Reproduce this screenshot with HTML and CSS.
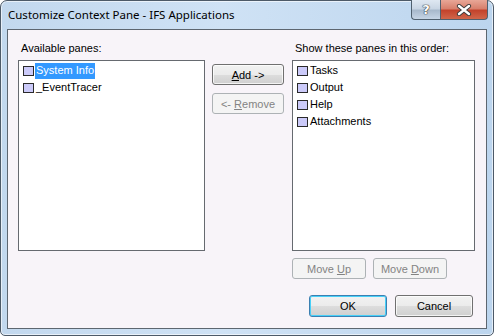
FILE: index.html
```html
<!DOCTYPE html>
<html lang="en">
<head>
    <meta charset="UTF-8">
    <title>Customize Context Pane - IFS Applications</title>
    <link rel="stylesheet" href="styles.css">
</head>
<body>

    <div class="window">
        <div class="titlebar">
            <span class="title">Customize Context Pane - IFS Applications</span>
            <div class="caption-buttons">
                <div class="cap-btn help">?</div>
                <div class="cap-btn close">
                    <svg width="16" height="12" viewBox="0 0 16 12">
                        <path d="M3 2 L13 10 M13 2 L3 10" stroke="#3a3a3a" stroke-width="4.2" stroke-linecap="round"/>
                        <path d="M3 2 L13 10 M13 2 L3 10" stroke="#ffffff" stroke-width="2.4" stroke-linecap="round"/>
                    </svg>
                </div>
            </div>
        </div>

        <div class="client">
            <div class="panes">
                <div class="col-left">
                    <div class="label">Available panes:</div>
                    <ul class="listbox left-list">
                        <li class="selected"><span class="ico"></span><span class="txt">System Info</span></li>
                        <li><span class="ico"></span><span class="txt">_EventTracer</span></li>
                    </ul>
                </div>

                <div class="col-mid">
                    <button class="btn"><u>A</u>dd -&gt;</button>
                    <button class="btn" disabled>&lt;- <u>R</u>emove</button>
                </div>

                <div class="col-right">
                    <div class="label">Show these panes in this order:</div>
                    <ul class="listbox right-list">
                        <li><span class="ico"></span><span class="txt">Tasks</span></li>
                        <li><span class="ico"></span><span class="txt">Output</span></li>
                        <li><span class="ico"></span><span class="txt">Help</span></li>
                        <li><span class="ico"></span><span class="txt">Attachments</span></li>
                    </ul>
                    <div class="move-row">
                        <button class="btn move" disabled>Move <u>U</u>p</button>
                        <button class="btn move" disabled>Move <u>D</u>own</button>
                    </div>
                </div>
            </div>

            <div class="actions">
                <button class="btn action default">OK</button>
                <button class="btn action">Cancel</button>
            </div>
        </div>
    </div>

</body>
</html>
```

FILE: styles.css
```css
* {
    margin: 0;
    padding: 0;
    box-sizing: border-box;
}

body {
    width: 494px;
    height: 336px;
    background: #ffffff;
    font-family: 'Liberation Sans', Arial, sans-serif;
    font-size: 11px;
    color: #000;
    overflow: hidden;
}

.window {
    width: 494px;
    height: 336px;
    border: 1px solid #4d5a68;
    border-radius: 7px 7px 5px 5px;
    background: linear-gradient(to right, #c2d8ee 0%, #cfe2f5 45%, #bcd5ee 100%);
    padding: 0 6px 6px 6px;
    display: flex;
    flex-direction: column;
    box-shadow: inset 0 0 0 1px rgba(255, 255, 255, 0.6);
}

.titlebar {
    height: 28px;
    display: flex;
    justify-content: space-between;
    align-items: flex-start;
}

.title {
    font-family: 'Noto Sans', sans-serif;
    font-size: 11.5px;
    padding-top: 6px;
    padding-left: 1px;
    color: #000;
}

.caption-buttons {
    display: flex;
    margin-right: -1px;
    margin-top: -1px;
}

.cap-btn {
    height: 20px;
    border: 1px solid #50606f;
    border-top: none;
    display: flex;
    align-items: center;
    justify-content: center;
}

.help {
    width: 29px;
    border-radius: 0 0 0 4px;
    border-right: none;
    background: linear-gradient(to bottom, #dfe8f2 0%, #c9d6e4 45%, #a8b9cc 55%, #c6d5e6 100%);
    font-family: 'DejaVu Sans', sans-serif;
    font-weight: bold;
    font-size: 13px;
    color: #fff;
    text-shadow: 0 0 1px #333, 0 0 1px #333, 0 0 1px #333;
}

.close {
    width: 48px;
    border-radius: 0 0 4px 0;
    background: linear-gradient(to bottom, #e8a797 0%, #d8806d 45%, #c3432c 55%, #d0664a 100%);
}

.client {
    flex: 1;
    border: 1px solid #5d6670;
    background: #f8f4f9;
    display: flex;
    flex-direction: column;
    padding: 12px 10px 11px 10px;
}

.panes {
    display: flex;
}

.label {
    height: 18px;
    line-height: 13px;
    padding-left: 3px;
}

.listbox {
    list-style: none;
    background: #fff;
    border: 1px solid #666a70;
    height: 191px;
    padding: 1px 0 0 4px;
}

.left-list {
    width: 187px;
}

.right-list {
    width: 183px;
}

.listbox li {
    height: 17px;
    display: flex;
    align-items: center;
}

.ico {
    width: 11px;
    height: 10px;
    border: 1px solid #2a2a2a;
    background: #cbcaf9;
    margin-right: 1px;
}

.txt {
    padding: 1px 1px 2px 1px;
    line-height: 13px;
}

.selected .txt {
    background: #3399ff;
    color: #fff;
}

.col-mid {
    display: flex;
    flex-direction: column;
    gap: 8px;
    width: 72px;
    margin: 4px 8px 0 7px;
    padding-top: 18px;
    flex-shrink: 0;
}

.btn {
    font-family: 'Liberation Sans', Arial, sans-serif;
    font-size: 11px;
    height: 21px;
    border: 1px solid #707070;
    border-radius: 3px;
    background: linear-gradient(to bottom, #f2f2f2 0%, #ebebeb 50%, #dddddd 51%, #cfcfcf 100%);
    box-shadow: inset 0 0 0 1px rgba(255, 255, 255, 0.75);
    color: #000;
}

.btn:disabled {
    border-color: #adb2b5;
    background: #f4f4f4;
    color: #838383;
    box-shadow: none;
}

.move-row {
    display: flex;
    gap: 7px;
    margin-top: 7px;
}

.move {
    width: 74px;
}

.actions {
    margin-top: auto;
    display: flex;
    justify-content: flex-end;
    gap: 8px;
    padding-right: 3px;
}

.action {
    width: 78px;
    height: 22px;
}

.default {
    border-color: #3c7fb1;
    box-shadow: inset 0 0 0 1px #48d0f8;
}
```
